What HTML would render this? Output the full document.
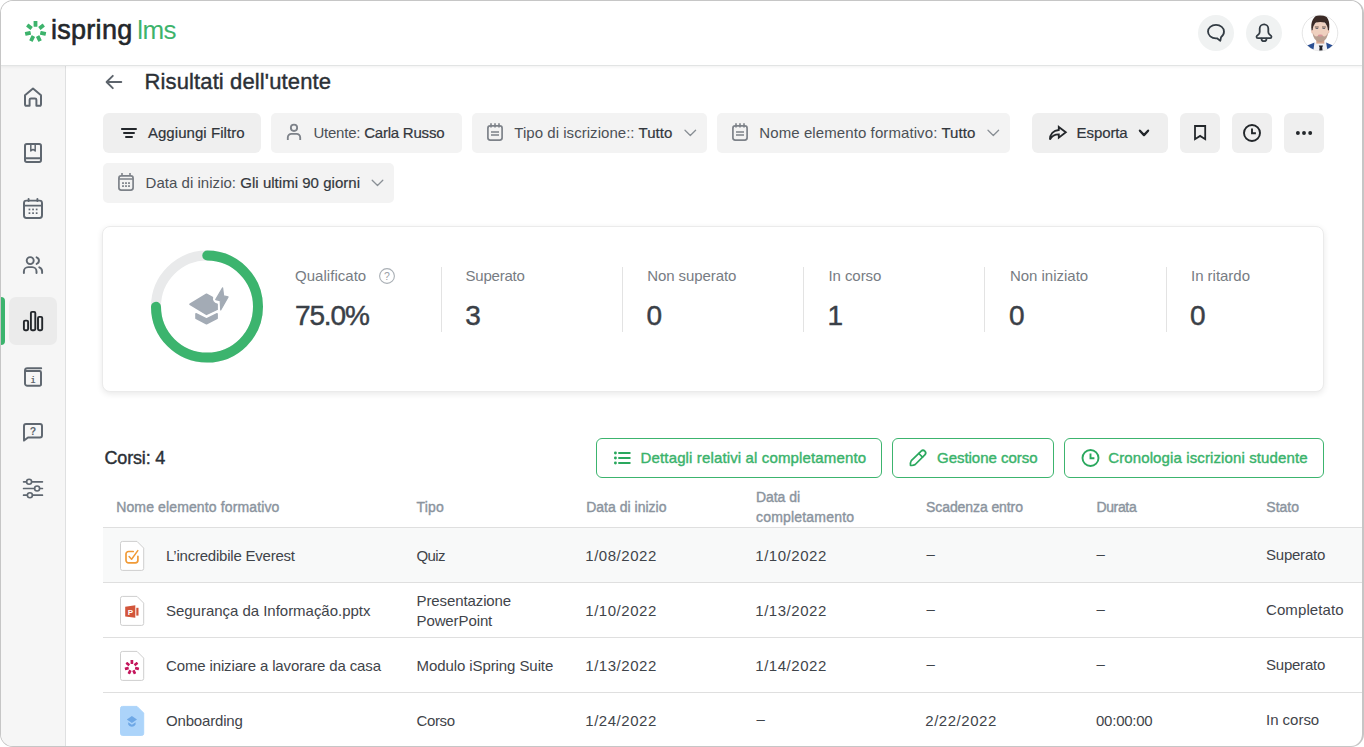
<!DOCTYPE html>
<html lang="it">
<head>
<meta charset="utf-8">
<title>Risultati dell'utente</title>
<style>
html,body{margin:0;padding:0;background:#fff;}
body{width:1364px;height:747px;overflow:hidden;position:relative;font-family:"Liberation Sans",sans-serif;}
#frame{position:absolute;left:0;top:0;width:1364px;height:747px;box-sizing:border-box;border:1px solid #c6c6c6;border-right-width:2px;border-bottom-width:1px;border-radius:13px;overflow:hidden;background:#fff;}
#app{position:absolute;left:-1px;top:-1px;width:1364px;height:747px;}
.abs{position:absolute;}
.t{position:absolute;white-space:nowrap;line-height:1;}
.b{font-weight:bold;}
.m{-webkit-text-stroke:0.4px currentColor;}
.sb{-webkit-text-stroke:0.6px currentColor;}
.v{-webkit-text-stroke:0.45px currentColor;}
.m2{-webkit-text-stroke:0.22px currentColor;color:#33383e;}
.md{-webkit-text-stroke:0.2px currentColor;}
#side{left:0;top:66px;width:65px;height:681px;background:#f6f6f6;border-right:1px solid #dfe0e1;}
#hdr{left:0;top:0;width:1364px;height:65px;background:#fff;border-bottom:1px solid #e2e4e4;box-shadow:0 1px 3px rgba(0,0,0,0.06);}
.chip{position:absolute;height:40px;top:113px;background:#f3f3f3;border-radius:5px;}
.btn{position:absolute;height:40px;top:113px;background:#efefef;border-radius:6px;}
.obtn{position:absolute;height:40px;top:438px;box-sizing:border-box;border:1px solid #3cb46e;border-radius:6px;background:#fff;}
#card{left:102px;top:226px;width:1222px;height:166px;box-sizing:border-box;border:1px solid #ebebeb;border-radius:8px;background:#fff;box-shadow:0 2px 6px rgba(0,0,0,0.09);}
.vd{position:absolute;top:267px;width:1px;height:65px;background:#e3e3e3;}
.hl{position:absolute;left:103px;width:1261px;height:1px;background:#dfdfdf;}
svg{position:absolute;left:0;top:0;overflow:visible;}
</style>
</head>
<body>
<div id="frame"><div id="app">

<div id="side" class="abs"></div>
<div id="hdr" class="abs"></div>

<!-- sidebar active -->
<div class="abs" style="left:1px;top:297px;width:4px;height:48px;background:#3cb46e;border-radius:0 4px 4px 0;"></div>
<div class="abs" style="left:9px;top:297px;width:48px;height:48px;background:#ebebeb;border-radius:7px;"></div>

<!-- header round buttons -->
<div class="abs" style="left:1198px;top:15px;width:36px;height:36px;border-radius:50%;background:#f0f2f2;"></div>
<div class="abs" style="left:1246px;top:15px;width:36px;height:36px;border-radius:50%;background:#f0f2f2;"></div>

<!-- filter chips -->
<div class="btn" style="left:103px;width:158px;"></div>
<div class="chip" style="left:271px;width:191px;"></div>
<div class="chip" style="left:472px;width:235px;"></div>
<div class="chip" style="left:717px;width:293px;"></div>
<div class="btn" style="left:1032px;width:136px;"></div>
<div class="btn" style="left:1180px;width:40px;"></div>
<div class="btn" style="left:1232px;width:40px;"></div>
<div class="btn" style="left:1284px;width:40px;"></div>
<div class="chip" style="left:103px;top:163px;width:291px;"></div>

<!-- stats card -->
<div id="card" class="abs"></div>
<div class="vd" style="left:441px;"></div>
<div class="vd" style="left:622px;"></div>
<div class="vd" style="left:803px;"></div>
<div class="vd" style="left:984px;"></div>
<div class="vd" style="left:1166px;"></div>

<!-- action buttons -->
<div class="obtn" style="left:596px;width:286px;"></div>
<div class="obtn" style="left:892px;width:162px;"></div>
<div class="obtn" style="left:1064px;width:260px;"></div>

<!-- table -->
<div class="abs" style="left:103px;top:528px;width:1261px;height:54px;background:#f8f9f9;"></div>
<div class="hl" style="top:527px;"></div>
<div class="hl" style="top:582px;"></div>
<div class="hl" style="top:637px;"></div>
<div class="hl" style="top:692px;"></div>

<svg width="1364" height="747" viewBox="0 0 1364 747">
<g fill="#3db36c"><rect x="33.60" y="21.00" width="3.80" height="5.70" rx="0.4" transform="rotate(0.00 35.50 31.60)"/><rect x="33.60" y="21.00" width="3.80" height="5.70" rx="0.4" transform="rotate(51.43 35.50 31.60)"/><rect x="33.60" y="21.00" width="3.80" height="5.70" rx="0.4" transform="rotate(102.86 35.50 31.60)"/><rect x="33.60" y="21.00" width="3.80" height="5.70" rx="0.4" transform="rotate(154.29 35.50 31.60)"/><rect x="33.60" y="21.00" width="3.80" height="5.70" rx="0.4" transform="rotate(205.71 35.50 31.60)"/><rect x="33.60" y="21.00" width="3.80" height="5.70" rx="0.4" transform="rotate(257.14 35.50 31.60)"/><rect x="33.60" y="21.00" width="3.80" height="5.70" rx="0.4" transform="rotate(308.57 35.50 31.60)"/></g>
<g fill="none" stroke="#5d646c" stroke-width="1.9" stroke-linecap="round" stroke-linejoin="round"><path d="M121.300 82H106.800M112.800 75.800l-6.200 6.200 6.200 6.200"/></g>
<g fill="none" stroke="#5f6770" stroke-width="1.95" stroke-linecap="round" stroke-linejoin="round">
<path d="M25 95.2 L33 88.6 L41 95.2 V104.6 a1.2 1.2 0 0 1 -1.2 1.2 H36.4 V99.8 a1.4 1.4 0 0 0 -1.4 -1.4 H31 a1.4 1.4 0 0 0 -1.4 1.4 V105.8 H26.2 a1.2 1.2 0 0 1 -1.2 -1.2 Z"/>
<rect x="25" y="144" width="16" height="18" rx="1.8"/><path d="M25 158.2H41"/><path d="M30.8 144.5V151l2.2-1.6 2.2 1.6V144.5" stroke-width="1.5"/>
<rect x="24" y="200.6" width="18" height="17.4" rx="2.4"/><path d="M24 205.6H42M28.6 198.900V201M37.4 198.900V201"/>
<circle cx="30.2" cy="260.6" r="3.5"/><path d="M23.9 273v-1.6a4.3 4.3 0 0 1 4.3-4.3h4a4.3 4.3 0 0 1 4.3 4.3V273"/><path d="M36.6 257.3a3.5 3.5 0 0 1 0 6.6M39.3 267.3a4.3 4.3 0 0 1 2.8 4.1V273"/>
<path d="M41.2 368.2H27.4a2.4 2.4 0 0 0 -2.4 2.4V383.4a2.4 2.4 0 0 0 2.4 2.4H39.6a1.4 1.4 0 0 0 1.4-1.4V372.4a1.4 1.4 0 0 0 -1.4-1.4H25.4"/>
<path d="M24 440.6V426a2 2 0 0 1 2-2H40a2 2 0 0 1 2 2v9.4a2 2 0 0 1 -2 2H28z"/>
<path d="M23.6 481.8H26.4M31.8 481.8H42.4M23.6 488.5H34.4M39.8 488.5H42.4M23.6 495.2H27.2M32.6 495.2H42.4" stroke-width="1.7"/><circle cx="29.1" cy="481.8" r="2.5" stroke-width="1.6"/><circle cx="37.1" cy="488.5" r="2.5" stroke-width="1.6"/><circle cx="29.9" cy="495.2" r="2.5" stroke-width="1.6"/>
</g>
<g fill="#5f6770">
<rect x="28.6" y="208.6" width="1.7" height="1.7"/>
<rect x="28.6" y="212.3" width="1.7" height="1.7"/>
<rect x="32.2" y="208.6" width="1.7" height="1.7"/>
<rect x="32.2" y="212.3" width="1.7" height="1.7"/>
<rect x="35.8" y="208.6" width="1.7" height="1.7"/>
<rect x="35.8" y="212.3" width="1.7" height="1.7"/>
</g>
<g fill="none" stroke="#23272b" stroke-width="1.9" stroke-linejoin="round"><rect x="23.9" y="320.6" width="4.2" height="9.6" rx="1.2"/><rect x="30.9" y="311.9" width="4.4" height="18.3" rx="1.2"/><rect x="38" y="316.9" width="4.2" height="13.3" rx="1.2"/></g>
<g fill="none" stroke="#333c44" stroke-width="1.8" stroke-linecap="round" stroke-linejoin="round">
<path d="M1216 24.900C1220.600 24.900 1224 27.900 1224 31.600C1224 34 1222.800 36 1221 37.300L1220.300 40.900L1217 38.300C1216.700 38.350 1216.300 38.400 1216 38.400C1211.400 38.400 1208 35.300 1208 31.600C1208 27.900 1211.400 24.900 1216 24.900Z"/>
<path transform="translate(0 -0.600)" d="M1264 24.900a4.300 4.300 0 0 1 4.300 4.300V32.500c0 1.400 0.600 2.200 1.800 3c1.200 0.800 1.400 1.200 1.400 1.900c0 0.800-0.600 1.400-1.400 1.400H1257.900c-0.800 0-1.400-0.600-1.400-1.400c0-0.700 0.200-1.100 1.400-1.900c1.200-0.800 1.800-1.600 1.800-3V29.200a4.300 4.300 0 0 1 4.300-4.300z"/><path d="M1261.500 38.700a2.500 2.500 0 0 0 5 0"/>
</g>
<clipPath id="av"><circle cx="1320" cy="33" r="17.6"/></clipPath>
<filter id="avb" x="-10%" y="-10%" width="120%" height="120%"><feGaussianBlur stdDeviation="0.45"/></filter>
<circle cx="1320" cy="33" r="17.8" fill="#fff" stroke="#e2e2e2" stroke-width="0.9"/>
<g clip-path="url(#av)"><g filter="url(#avb)"><path d="M1304 53L1306.600 45.800L1314.600 42.400L1316.500 53Z" fill="#2c4f93"/><path d="M1336 53L1333.600 45.800L1326 42.400L1324 53Z" fill="#2c4f93"/><path d="M1314.500 42.200L1320.300 43.600L1326.100 42.200L1327.800 53H1313Z" fill="#f1f1f5"/><path d="M1318.800 45.400H1323L1322.200 47.600L1322.900 53H1318.900L1319.600 47.600Z" fill="#20242c"/><rect x="1316.300" y="37" width="8" height="6.600" fill="#d5a68f"/><ellipse cx="1312.200" cy="31.500" rx="1" ry="2" fill="#ecc4b3"/><ellipse cx="1328.400" cy="31.500" rx="1" ry="2" fill="#ecc4b3"/><ellipse cx="1320.300" cy="31.400" rx="7.900" ry="10.300" fill="#efd0bf"/><path d="M1312.600 32.500C1313 38.500 1316.400 42 1320.300 42S1327.600 38.500 1328 32.500C1326.800 35.500 1325.200 36.800 1323.400 36.300C1321.600 35.700 1319 35.700 1317.200 36.300C1315.400 36.800 1313.800 35.500 1312.600 32.500Z" fill="#8d766b" opacity="0.55"/><ellipse cx="1320.300" cy="35.400" rx="2.600" ry="1" fill="#d9959b"/><path d="M1314.900 27h3.800M1322 27h3.800" stroke="#5a463f" stroke-width="0.9"/><path d="M1315.600 28.500h2.600M1322.500 28.500h2.600" stroke="#5d5f66" stroke-width="0.9"/><path d="M1311.600 30.500C1310.300 22 1313 15.400 1320.500 14.200C1328 14.900 1330.400 21.500 1329 30.500L1327.900 30C1327.700 27.500 1327.200 26 1326.400 25C1326 23.800 1325.400 23 1324.600 22.400C1322 21.700 1318.600 21.700 1316 22.400C1315.200 23 1314.600 23.800 1314.200 25C1313.400 26 1312.900 27.500 1312.700 30Z" fill="#3a2a27"/></g></g>
<g stroke="#23272b" stroke-width="2" stroke-linecap="round"><path d="M121.900 129H136M124 133H134M126 137H132"/></g>
<g fill="none" stroke="#7d8289" stroke-width="1.850" stroke-linecap="butt"><circle cx="294" cy="127.800" r="3.150"/><path d="M287.800 140v-2.500a3.600 3.600 0 0 1 3.600-3.600h5.200a3.600 3.600 0 0 1 3.600 3.600V140"/></g>
<g fill="none" stroke="#7d8289" stroke-width="1.7"><rect x="487.90" y="125.90" width="14.200" height="14.200" rx="2.300"/><path d="M491.00 123.20v4.400M495.00 123.20v4.400M499.00 123.20v4.400" stroke-width="1.600"/><path d="M491.00 132.00h8M491.00 135.00h8"/></g>
<g fill="none" stroke="#7d8289" stroke-width="1.7"><rect x="732.90" y="125.90" width="14.200" height="14.200" rx="2.300"/><path d="M736.00 123.20v4.400M740.00 123.20v4.400M744.00 123.20v4.400" stroke-width="1.600"/><path d="M736.00 132.00h8M736.00 135.00h8"/></g>
<g fill="none" stroke="#7d8289" stroke-width="1.7"><rect x="118.90" y="175.90" width="14.200" height="14.200" rx="2.300"/><path d="M122.00 173.10v3M130.00 173.10v3" stroke-width="1.600"/><path d="M118.90 179.00h14.200"/></g><g fill="#7d8289"><rect x="122.10" y="182.20" width="1.800" height="1.800"/><rect x="122.10" y="185.20" width="1.800" height="1.800"/><rect x="125.10" y="182.20" width="1.800" height="1.800"/><rect x="125.10" y="185.20" width="1.800" height="1.800"/><rect x="128.10" y="182.20" width="1.800" height="1.800"/><rect x="128.10" y="185.20" width="1.800" height="1.800"/></g>
<path d="M685.00 130.20l5.30 5.30 5.30 -5.30" fill="none" stroke="#8a9096" stroke-width="1.30" stroke-linecap="round" stroke-linejoin="round"/>
<path d="M988.00 130.20l5.30 5.30 5.30 -5.30" fill="none" stroke="#8a9096" stroke-width="1.30" stroke-linecap="round" stroke-linejoin="round"/>
<path d="M372.20 180.20l5.30 5.30 5.30 -5.30" fill="none" stroke="#8a9096" stroke-width="1.30" stroke-linecap="round" stroke-linejoin="round"/>
<path d="M1139.90 130.70l4.10 4.40 4.10 -4.40" fill="none" stroke="#23272b" stroke-width="2.30" stroke-linecap="round" stroke-linejoin="round"/>
<path d="M1058.800 126.900L1065.800 132.300L1058.800 137.700V134.400C1054.600 134.400 1051.500 136.200 1049.900 139.600C1050 134.200 1053.400 130.400 1058.800 130Z" fill="none" stroke="#23272b" stroke-width="1.850" stroke-linejoin="miter"/>
<path d="M1195 126h10.200v13.200l-5.100-3.300-5.100 3.300z" fill="none" stroke="#23272b" stroke-width="1.800" stroke-linejoin="miter"/>
<g fill="none" stroke="#23272b" stroke-width="1.9"><circle cx="1252.00" cy="133.00" r="8"/><path d="M1252.00 128.40v4.900h3.900" stroke-linecap="butt"/></g>
<g fill="#23272b"><circle cx="1297.900" cy="133" r="1.950"/><circle cx="1304" cy="133" r="1.950"/><circle cx="1310.200" cy="133" r="1.950"/></g>
<circle cx="207" cy="306.6" r="51" fill="none" stroke="#e9eaeb" stroke-width="10"/>
<path d="M207.27 255.60A51 51 0 1 1 156.00 306.87" fill="none" stroke="#3cb46e" stroke-width="10" stroke-linecap="round"/>
<g fill="#a3abb5" stroke="#a3abb5" stroke-width="1.6" stroke-linejoin="round"><path d="M190 304.300L206.500 294.200L212.400 297.500C211.400 300.200 213.600 303.600 217.100 304.200V309.400L206.500 314.400Z"/><path d="M196 313.800L206.500 319L217.100 313.800V318.200L206.500 323.800L196 318.200Z"/><path d="M222.600 287.800L215.700 299.600L220.200 300.600L220.700 309.900L228.100 296.900L223.600 295.900Z" stroke-width="1.200"/></g>
<circle cx="387" cy="276" r="7.400" fill="none" stroke="#a9afb5" stroke-width="1.100"/>
<text x="387" y="279.800" font-size="10.500" text-anchor="middle" fill="#9aa0a7" font-family="Liberation Sans, sans-serif">?</text>
<text x="33" y="435" font-size="10.500" font-weight="bold" text-anchor="middle" fill="#5f6770" font-family="Liberation Sans, sans-serif">?</text>
<text x="33" y="382.600" font-size="8.500" font-weight="bold" text-anchor="middle" fill="#5f6770" font-family="Liberation Mono, monospace">i</text>
<g fill="#2aa85e"><circle cx="615.400" cy="453" r="1.450"/><circle cx="615.400" cy="458" r="1.450"/><circle cx="615.400" cy="463" r="1.450"/></g>
<g stroke="#2aa85e" stroke-width="1.900" stroke-linecap="round"><path d="M619 453H629.800M619 458H629.800M619 463H629.800"/></g>
<g fill="none" stroke="#2aa85e" stroke-width="1.700" stroke-linejoin="round" stroke-linecap="round"><path d="M911.300 460.600L921.160 451.160A2.600 2.600 0 0 1 924.840 454.840L915.200 464.500C913.800 465.500 912 465.600 910.500 465.400C910.300 463.800 910.400 462 911.300 460.600Z"/><path d="M918.800 453.500L922.500 457.200"/></g>
<g fill="none" stroke="#2aa85e" stroke-width="1.9"><circle cx="1090.50" cy="458.00" r="8"/><path d="M1090.50 453.40v4.900h3.900" stroke-linecap="butt"/></g>
<path d="M122.50 541.40h14.500l6.700 6.700v20.300a2 2 0 0 1 -2 2h-19.200a2 2 0 0 1 -2-2v-25a2 2 0 0 1 2-2z" fill="#fff" stroke="#cecece" stroke-width="1"/>
<path d="M122.50 596.40h14.500l6.700 6.700v20.300a2 2 0 0 1 -2 2h-19.200a2 2 0 0 1 -2-2v-25a2 2 0 0 1 2-2z" fill="#fff" stroke="#cecece" stroke-width="1"/>
<path d="M122.50 651.40h14.500l6.700 6.700v20.300a2 2 0 0 1 -2 2h-19.200a2 2 0 0 1 -2-2v-25a2 2 0 0 1 2-2z" fill="#fff" stroke="#cecece" stroke-width="1"/>
<path d="M122.50 706.40h14.500l6.700 6.700v20.300a2 2 0 0 1 -2 2h-19.200a2 2 0 0 1 -2-2v-25a2 2 0 0 1 2-2z" fill="#acd4fa" stroke="#acd4fa" stroke-width="1"/>
<g fill="none" stroke="#f09a37" stroke-width="1.700" stroke-linecap="round" stroke-linejoin="round"><path d="M133.200 551.500H128.600a2.600 2.600 0 0 0 -2.600 2.600V560.300a2.600 2.600 0 0 0 2.600 2.600H135.300a2.600 2.600 0 0 0 2.600-2.600V556.300"/><path d="M129.100 556.500l2.500 2.700 6.200-8.600" stroke-width="1.500"/></g>
<path d="M125.200 606.700L135.300 605.200V617.700L125.200 616.600Z" fill="#d2553a"/><rect x="136.300" y="607.800" width="2.200" height="7.800" fill="#d2553a"/>
<text x="130.400" y="614.600" font-size="8" font-weight="bold" text-anchor="middle" fill="#fff" font-family="Liberation Sans, sans-serif">P</text>
<g fill="#c4165c"><rect x="130.55" y="660.10" width="2.70" height="3.90" rx="0.4" transform="rotate(0.00 131.90 667.30)"/><rect x="130.55" y="660.10" width="2.70" height="3.90" rx="0.4" transform="rotate(51.43 131.90 667.30)"/><rect x="130.55" y="660.10" width="2.70" height="3.90" rx="0.4" transform="rotate(102.86 131.90 667.30)"/><rect x="130.55" y="660.10" width="2.70" height="3.90" rx="0.4" transform="rotate(154.29 131.90 667.30)"/><rect x="130.55" y="660.10" width="2.70" height="3.90" rx="0.4" transform="rotate(205.71 131.90 667.30)"/><rect x="130.55" y="660.10" width="2.70" height="3.90" rx="0.4" transform="rotate(257.14 131.90 667.30)"/><rect x="130.55" y="660.10" width="2.70" height="3.90" rx="0.4" transform="rotate(308.57 131.90 667.30)"/></g>
<path d="M131.900 716L137 719.500L131.900 723L126.800 719.500Z" fill="#6ea8e6"/><path d="M128.200 722.300L131.900 724.800L135.600 722.300V724.600C134.600 726 133.300 726.800 131.900 726.800S129.200 726 128.200 724.600Z" fill="#6ea8e6"/>
</svg>

<div class="t sb" style="left:51.0px;top:17px;font-size:27px;color:#23272b;letter-spacing:0.276px;">ispring</div>
<div class="t" style="left:137.3px;top:17px;font-size:26px;color:#3db36c;letter-spacing:-0.619px;">lms</div>
<div class="t m" style="left:144.5px;top:71px;font-size:22px;color:#2b3036;letter-spacing:0.126px;">Risultati dell'utente</div>
<div class="t md" style="left:147.9px;top:125px;font-size:15px;color:#30353b;letter-spacing:0.058px;">Aggiungi Filtro</div>
<div class="t" style="left:313.4px;top:125px;font-size:15px;color:#4b5056;letter-spacing:-0.220px;">Utente: <span class="m2">Carla Russo</span></div>
<div class="t" style="left:514.3px;top:125px;font-size:15px;color:#4b5056;letter-spacing:0.039px;">Tipo di iscrizione:: <span class="m2">Tutto</span></div>
<div class="t" style="left:759.3px;top:125px;font-size:15px;color:#4b5056;letter-spacing:0.091px;">Nome elemento formativo: <span class="m2">Tutto</span></div>
<div class="t md" style="left:1076.6px;top:125px;font-size:15px;color:#30353b;letter-spacing:-0.101px;">Esporta</div>
<div class="t" style="left:145.6px;top:175px;font-size:15px;color:#4b5056;letter-spacing:0.028px;">Data di inizio: <span class="m2">Gli ultimi 90 giorni</span></div>
<div class="t" style="left:295.0px;top:268px;font-size:15px;color:#777c83;letter-spacing:0.033px;">Qualificato</div>
<div class="t" style="left:465.6px;top:268px;font-size:15px;color:#777c83;letter-spacing:-0.227px;">Superato</div>
<div class="t" style="left:647.3px;top:268px;font-size:15px;color:#777c83;letter-spacing:-0.097px;">Non superato</div>
<div class="t" style="left:828.4px;top:268px;font-size:15px;color:#777c83;letter-spacing:-0.051px;">In corso</div>
<div class="t" style="left:1009.9px;top:268px;font-size:15px;color:#777c83;letter-spacing:-0.008px;">Non iniziato</div>
<div class="t" style="left:1191.0px;top:268px;font-size:15px;color:#777c83;letter-spacing:-0.023px;">In ritardo</div>
<div class="t v" style="left:295.0px;top:302px;font-size:28px;color:#3a4047;letter-spacing:-1.152px;">75.0%</div>
<div class="t v" style="left:465.3px;top:302px;font-size:28px;color:#3a4047;">3</div>
<div class="t v" style="left:646.5px;top:302px;font-size:28px;color:#3a4047;">0</div>
<div class="t v" style="left:827.5px;top:302px;font-size:28px;color:#3a4047;">1</div>
<div class="t v" style="left:1009.0px;top:302px;font-size:28px;color:#3a4047;">0</div>
<div class="t v" style="left:1190.0px;top:302px;font-size:28px;color:#3a4047;">0</div>
<div class="t m" style="left:104.5px;top:449px;font-size:18px;color:#2b3036;letter-spacing:-0.174px;">Corsi: 4</div>
<div class="t m" style="left:640.6px;top:450px;font-size:15px;color:#3ab36b;letter-spacing:0.138px;">Dettagli relativi al completamento</div>
<div class="t m" style="left:937.0px;top:450px;font-size:15px;color:#3ab36b;letter-spacing:-0.030px;">Gestione corso</div>
<div class="t m" style="left:1108.2px;top:450px;font-size:15px;color:#3ab36b;letter-spacing:0.119px;">Cronologia iscrizioni studente</div>
<div class="t m" style="left:116.2px;top:500px;font-size:14px;color:#8b949e;letter-spacing:0.132px;">Nome elemento formativo</div>
<div class="t m" style="left:416.5px;top:500px;font-size:14px;color:#8b949e;letter-spacing:0.227px;">Tipo</div>
<div class="t m" style="left:586.2px;top:500px;font-size:14px;color:#8b949e;letter-spacing:0.011px;">Data di inizio</div>
<div class="t m" style="left:756.0px;top:490px;font-size:14px;color:#8b949e;letter-spacing:-0.060px;">Data di</div>
<div class="t m" style="left:756.0px;top:510px;font-size:14px;color:#8b949e;letter-spacing:0.190px;">completamento</div>
<div class="t m" style="left:926.0px;top:500px;font-size:14px;color:#8b949e;letter-spacing:-0.083px;">Scadenza entro</div>
<div class="t m" style="left:1096.4px;top:500px;font-size:14px;color:#8b949e;letter-spacing:-0.346px;">Durata</div>
<div class="t m" style="left:1266.3px;top:500px;font-size:14px;color:#8b949e;">Stato</div>
<div class="t" style="left:166.0px;top:548px;font-size:15px;color:#3f444a;letter-spacing:-0.220px;">L’incredibile Everest</div>
<div class="t" style="left:166.0px;top:603px;font-size:15px;color:#3f444a;letter-spacing:-0.027px;">Segurança da Informação.pptx</div>
<div class="t" style="left:166.0px;top:658px;font-size:15px;color:#3f444a;letter-spacing:-0.138px;">Come iniziare a lavorare da casa</div>
<div class="t" style="left:166.0px;top:713px;font-size:15px;color:#3f444a;letter-spacing:-0.178px;">Onboarding</div>
<div class="t" style="left:416.5px;top:548px;font-size:15px;color:#3f444a;letter-spacing:-0.615px;">Quiz</div>
<div class="t" style="left:416.5px;top:593px;font-size:15px;color:#3f444a;letter-spacing:-0.101px;">Presentazione</div>
<div class="t" style="left:416.5px;top:613px;font-size:15px;color:#3f444a;letter-spacing:-0.102px;">PowerPoint</div>
<div class="t" style="left:416.5px;top:658px;font-size:15px;color:#3f444a;letter-spacing:-0.085px;">Modulo iSpring Suite</div>
<div class="t" style="left:416.5px;top:713px;font-size:15px;color:#3f444a;letter-spacing:-0.354px;">Corso</div>
<div class="t" style="left:585.3px;top:548px;font-size:15px;color:#3f444a;letter-spacing:0.533px;">1/08/2022</div>
<div class="t" style="left:755.3px;top:548px;font-size:15px;color:#3f444a;letter-spacing:0.533px;">1/10/2022</div>
<div class="t" style="left:926.5px;top:546px;font-size:15px;color:#3f444a;">–</div>
<div class="t" style="left:1096.6px;top:546px;font-size:15px;color:#3f444a;">–</div>
<div class="t" style="left:1266.0px;top:547px;font-size:15px;color:#3f444a;letter-spacing:-0.227px;">Superato</div>
<div class="t" style="left:585.3px;top:603px;font-size:15px;color:#3f444a;letter-spacing:0.533px;">1/10/2022</div>
<div class="t" style="left:755.3px;top:603px;font-size:15px;color:#3f444a;letter-spacing:0.533px;">1/13/2022</div>
<div class="t" style="left:926.5px;top:601px;font-size:15px;color:#3f444a;">–</div>
<div class="t" style="left:1096.6px;top:601px;font-size:15px;color:#3f444a;">–</div>
<div class="t" style="left:1266.0px;top:602px;font-size:15px;color:#3f444a;letter-spacing:0.098px;">Completato</div>
<div class="t" style="left:585.3px;top:658px;font-size:15px;color:#3f444a;letter-spacing:0.533px;">1/13/2022</div>
<div class="t" style="left:755.3px;top:658px;font-size:15px;color:#3f444a;letter-spacing:0.533px;">1/14/2022</div>
<div class="t" style="left:926.5px;top:656px;font-size:15px;color:#3f444a;">–</div>
<div class="t" style="left:1096.6px;top:656px;font-size:15px;color:#3f444a;">–</div>
<div class="t" style="left:1266.0px;top:657px;font-size:15px;color:#3f444a;letter-spacing:-0.227px;">Superato</div>
<div class="t" style="left:585.3px;top:713px;font-size:15px;color:#3f444a;letter-spacing:0.533px;">1/24/2022</div>
<div class="t" style="left:756.5px;top:711px;font-size:15px;color:#3f444a;">–</div>
<div class="t" style="left:925.3px;top:713px;font-size:15px;color:#3f444a;letter-spacing:0.533px;">2/22/2022</div>
<div class="t" style="left:1096.0px;top:713px;font-size:15px;color:#3f444a;letter-spacing:-0.242px;">00:00:00</div>
<div class="t" style="left:1266.0px;top:712px;font-size:15px;color:#3f444a;letter-spacing:-0.023px;">In corso</div>

</div></div>
</body>
</html>
